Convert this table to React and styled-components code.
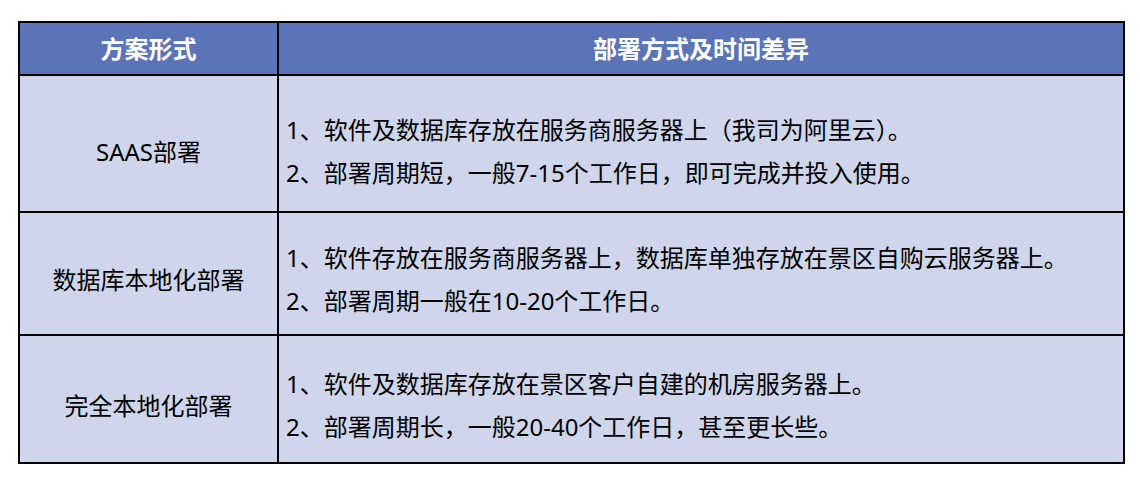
import React from "react";
import styled, { createGlobalStyle } from "styled-components";

const GlobalStyle = createGlobalStyle`
  html, body {
    margin: 0;
    padding: 0;
    background: #fff;
  }
  body {
    font-family: "Noto Sans", "Noto Sans CJK SC", sans-serif;
    color: #000;
  }
`;

const Table = styled.div`
  box-sizing: border-box;
  margin: 21px 0 0 18px;
  width: 1107px;
  border: 2px solid #000;
  background: #000;
  display: grid;
  grid-template-columns: 257px 1fr;
  grid-auto-rows: auto;
  gap: 2px;
`;

const HeadCell = styled.div`
  height: 51px;
  background: #5b73b7;
  color: #fff;
  font-weight: 700;
  font-size: 24px;
  display: flex;
  align-items: center;
  justify-content: center;
  padding-bottom: 2px;
  box-sizing: border-box;
`;

const NameCell = styled.div`
  height: ${(p) => p.$h}px;
  background: #cfd5ea;
  font-size: 24px;
  display: flex;
  align-items: center;
  justify-content: center;
  padding-top: ${(p) => p.$offset}px;
  box-sizing: border-box;
`;

const DescCell = styled.div`
  height: ${(p) => p.$h}px;
  background: #cfd5ea;
  display: flex;
  flex-direction: column;
  justify-content: center;
  padding: ${(p) => p.$offset}px 0 0 7px;
  box-sizing: border-box;
`;

const Line = styled.p`
  margin: 0;
  font-size: 24px;
  line-height: 43px;
  white-space: nowrap;
`;

const rows = [
  {
    name: "SAAS部署",
    h: 135,
    offset: 14,
    lines: [
      "1、软件及数据库存放在服务商服务器上（我司为阿里云）。",
      "2、部署周期短，一般7-15个工作日，即可完成并投入使用。",
    ],
  },
  {
    name: "数据库本地化部署",
    h: 121,
    offset: 10,
    lines: [
      "1、软件存放在服务商服务器上，数据库单独存放在景区自购云服务器上。",
      "2、部署周期一般在10-20个工作日。",
    ],
  },
  {
    name: "完全本地化部署",
    h: 126,
    offset: 11,
    lines: [
      "1、软件及数据库存放在景区客户自建的机房服务器上。",
      "2、部署周期长，一般20-40个工作日，甚至更长些。",
    ],
  },
];

export default function App() {
  return (
    <>
      <GlobalStyle />
      <Table>
        <HeadCell>方案形式</HeadCell>
        <HeadCell>部署方式及时间差异</HeadCell>
        {rows.map((r) => (
          <React.Fragment key={r.name}>
            <NameCell $h={r.h} $offset={r.offset}>
              {r.name}
            </NameCell>
            <DescCell $h={r.h} $offset={r.offset}>
              {r.lines.map((l) => (
                <Line key={l}>{l}</Line>
              ))}
            </DescCell>
          </React.Fragment>
        ))}
      </Table>
    </>
  );
}
